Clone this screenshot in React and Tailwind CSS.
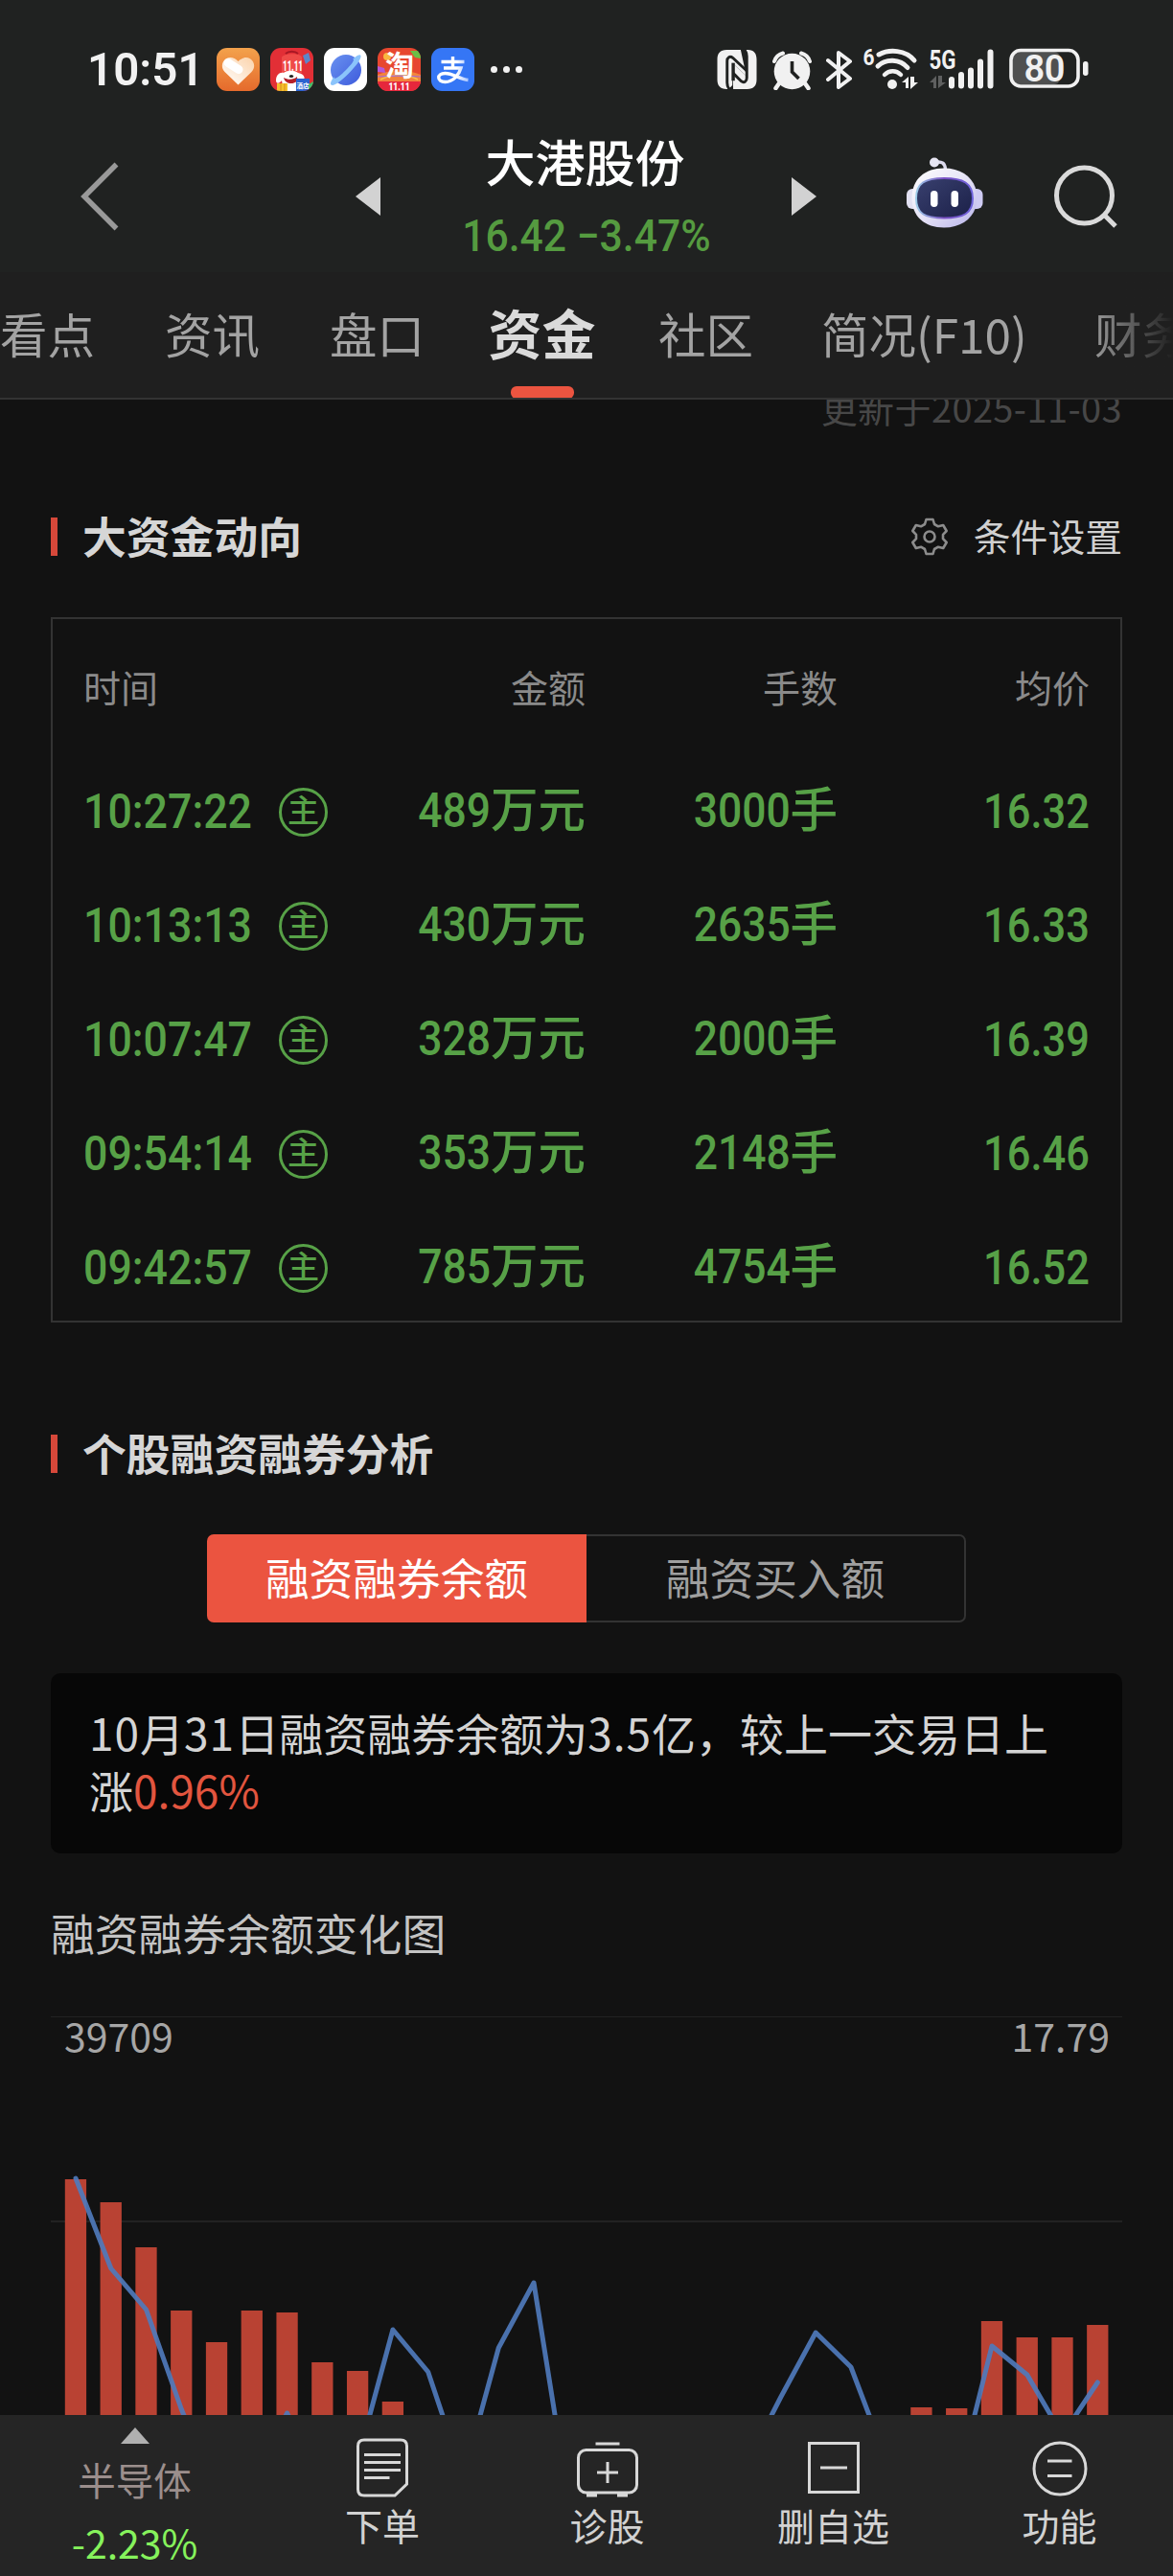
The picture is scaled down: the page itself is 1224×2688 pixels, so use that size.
import React from "react";

const CJK = "font-['Noto_Sans_CJK_SC',sans-serif]";
const NUM = "font-['Roboto','Noto_Sans_CJK_SC',sans-serif]";

function HeartApp() {
  return (
    <svg viewBox="0 0 45 45" className="size-[45px]">
      <defs>
        <linearGradient id="ha" x1="0" y1="0" x2="0" y2="1">
          <stop offset="0" stopColor="#f3a24c" />
          <stop offset="1" stopColor="#e56a2c" />
        </linearGradient>
        <linearGradient id="hb" x1="0" y1="1" x2="1" y2="0">
          <stop offset="0" stopColor="#ffffff" />
          <stop offset="1" stopColor="#fbd3ab" />
        </linearGradient>
      </defs>
      <rect width="45" height="45" rx="11" fill="url(#ha)" />
      <path d="M22.500 38.500 8.500 25C4.500 21 5 14 10 11.200c4-2.200 9-1 12.500 2.800 3.500-3.800 8.500-5 12.500-2.800 5 2.800 5.500 9.800 1.500 13.800z" fill="url(#hb)" />
      <path d="M12 15.500 23 22.500" stroke="#fff" strokeWidth="9" strokeLinecap="round" />
    </svg>
  );
}

function DogApp() {
  return (
    <svg viewBox="0 0 45 45" className="size-[45px] overflow-visible">
      <defs>
        <clipPath id="dc"><rect width="45" height="45" rx="11" /></clipPath>
      </defs>
      <g clipPath="url(#dc)">
        <rect width="45" height="45" fill="#e22f36" />
        <path d="M12 26V10c0-4 20-6 21 0v16z" fill="#ef4b48" />
        <path d="M16 6c3-3 10-3 13 0" stroke="#a91824" strokeWidth="2" fill="none" />
        <path d="M34 8l6-3 2 8-5 4z" fill="#5d86c9" />
        <path d="M14 26c-4-1-8 2-8 8 0 4 4 3 6 0l2 11h17l2-11c4 0 4-7-4-8-4-3-11-3-15 0z" fill="#fff" />
        <path d="M14 31c5 3 11 2 14-1 1 5-2 7-6 7s-7-2-8-6z" fill="#b4202a" />
        <ellipse cx="22" cy="29.500" rx="2.200" ry="1.500" fill="#222" />
        <path d="M7 37h11v8H7z" fill="#f5c02c" />
        <path d="M11 37v8M15 37v8" stroke="#d98e1d" />
        <path d="M27 32h14v13H27z" fill="#2a62cf" />
        <path d="M40 38l5-3v6l-5 4z" fill="#3fbf6a" />
      </g>
      <text x="23.500" y="23.500" textAnchor="middle" fontSize="15" fontWeight="800" fill="#fff" fontFamily="Roboto, sans-serif" textLength="21" lengthAdjust="spacingAndGlyphs">11.11</text>
      <text x="34" y="41.500" textAnchor="middle" fontSize="6.500" fontWeight="700" fill="#fff" fontFamily="Noto Sans CJK SC, sans-serif">酒店</text>
    </svg>
  );
}

function PlanetApp() {
  return (
    <svg viewBox="0 0 45 45" className="size-[45px]">
      <defs>
        <linearGradient id="pa" x1="0" y1="0" x2="1" y2="1">
          <stop offset="0" stopColor="#6a92f0" />
          <stop offset="1" stopColor="#3d5bdc" />
        </linearGradient>
      </defs>
      <rect width="45" height="45" rx="11" fill="#fff" />
      <circle cx="23" cy="23" r="16" fill="url(#pa)" />
      <path d="M30 12c5-5 8-5.500 8.500-4 1 3-5 11-13 19S10 40.500 7.500 38.500c-1.500-1.300.5-5 3-8.500 0 4.500 6-.5 12-6.500C29 17 33 11.500 30 12z" fill="#8bc4fb" />
    </svg>
  );
}

function TaoApp() {
  return (
    <svg viewBox="0 0 45 45" className="size-[45px] overflow-visible">
      <defs>
        <clipPath id="tc"><rect width="45" height="45" rx="11" /></clipPath>
      </defs>
      <g clipPath="url(#tc)">
        <rect width="45" height="45" fill="#e7472f" />
        <path d="M0 28c15-6 30-6 45 0v9H0z" fill="#f2843d" />
        <path d="M3 33c12-6 28-6 39 0" stroke="#f7c14b" strokeWidth="1.500" fill="none" />
        <path d="M0 30c12-1 30-1 45 0" stroke="#a66bd6" strokeWidth="1.200" fill="none" />
        <circle cx="10" cy="9" r="4" fill="#f9b640" />
        <path d="M34 3l11 0v8l-6-1z" fill="#6bbf45" />
        <path d="M0 19l7 2 1 5-8-1z" fill="#b659d8" />
        <rect y="35" width="45" height="10" fill="#e6273c" />
      </g>
      <text x="23" y="28.500" textAnchor="middle" fontSize="30" fontWeight="700" fill="#fff" fontFamily="Noto Sans CJK SC, sans-serif">淘</text>
      <text x="22.500" y="44" textAnchor="middle" fontSize="10" fontWeight="900" fill="#fff" fontFamily="Roboto, sans-serif" textLength="22" lengthAdjust="spacingAndGlyphs">11.11</text>
    </svg>
  );
}

function PayApp() {
  return (
    <svg viewBox="0 0 45 45" className="size-[45px]">
      <defs>
        <linearGradient id="zf" x1="0" y1="0" x2="1" y2="0">
          <stop offset="0.600" stopColor="#fff" />
          <stop offset="1" stopColor="#a9c5ff" />
        </linearGradient>
      </defs>
      <rect width="45" height="45" rx="11" fill="#3576f5" />
      <path d="M22.500 9v11M10.500 14.500h24M13 21h18c-2 7-8 14.500-16.500 14.500-9 0-9-9 0-9 8 0 15 6 24 7" fill="none" stroke="url(#zf)" strokeWidth="3.400" />
    </svg>
  );
}

function StatusIcons() {
  return (
    <div className="flex items-start pt-[50px]">
      {/* NFC */}
      <svg viewBox="0 0 42 42" className="mt-[2px] h-[41px] w-[42px]">
        <path d="M10 0h15l6 28-15-14v24l-4 4h-2C3 42 0 38 0 32V10C0 4 3 0 10 0z" fill="#f1f1f1" />
        <path d="M32 42H17l-1-28 15 14V4l-2-4h4c6 0 9 4 9 10v22c0 6-3 10-10 10z" fill="#f1f1f1" />
        <path d="M13 42c-2-2-2.500-4-2.500-7V12c0-4 3-6 6-3.500L31 22M29 0c2 2 2.500 4 2.500 7v23c0 4-3 6-6 3.500L17 25" fill="none" stroke="#202221" strokeWidth="3" />
        <path d="M17 14v19" stroke="#202221" strokeWidth="3.500" />
      </svg>
      {/* alarm */}
      <svg viewBox="0 0 41 41" className="ml-[16px] mt-[3px] size-[41px]">
        <path d="M2 11A13 13 0 0 1 11 2.500M39 11A13 13 0 0 0 30 2.500" stroke="#f1f1f1" strokeWidth="4" strokeLinecap="round" fill="none" />
        <circle cx="20.500" cy="21.500" r="18.800" fill="#f1f1f1" />
        <path d="M7 34l-3.500 5M34 34l3.500 5" stroke="#f1f1f1" strokeWidth="4.500" strokeLinecap="round" />
        <path d="M20.500 11v11l7 7" stroke="#202221" strokeWidth="3.600" fill="none" />
      </svg>
      {/* bluetooth */}
      <svg viewBox="0 0 28 42" className="ml-[15px] mt-[2px] h-[42px] w-[28px]">
        <path d="M2 11l23 19-12 9V3l12 9L2 31" fill="none" stroke="#f1f1f1" strokeWidth="4" strokeLinejoin="round" strokeLinecap="round" />
      </svg>
      {/* wifi */}
      <svg viewBox="0 0 57 45" className="ml-[11px] h-[45px] w-[57px] overflow-visible">
        <text x="-0.500" y="17.500" fontSize="24" fontWeight="700" fill="#f1f1f1" fontFamily="Roboto, sans-serif" textLength="12" lengthAdjust="spacingAndGlyphs">6</text>
        <path d="M16 7C27 1 44 2 53 13" stroke="#f1f1f1" strokeWidth="5" strokeLinecap="round" fill="none" />
        <path d="M15 19c8-8 23-8 31 1.500" stroke="#f1f1f1" strokeWidth="5" strokeLinecap="round" fill="none" />
        <path d="M22 28c5-5 12-5 17 0" stroke="#f1f1f1" strokeWidth="4.500" strokeLinecap="round" fill="none" />
        <circle cx="30" cy="38" r="5" fill="#f1f1f1" />
        <path d="M40 36l7-6v12h-3v-6zM49 30v13l8-7h-4v-6z" fill="#f1f1f1" />
      </svg>
      {/* signal */}
      <svg viewBox="0 0 67 43" className="ml-[12px] h-[43px] w-[67px] overflow-visible">
        <text x="-0.500" y="21.500" fontSize="28" fontWeight="700" fill="#f1f1f1" fontFamily="Roboto, sans-serif" textLength="28" lengthAdjust="spacingAndGlyphs">5G</text>
        <path d="M0 36l7-7v13H4v-6zM9 29v13l8-6h-4v-7z" fill="#5f6060" />
        <path d="M23 33v6.500M33 28v11.500M43 23.500v16M53 14.500v25M63.500 4.500v35" stroke="#f1f1f1" strokeWidth="6" strokeLinecap="round" />
      </svg>
      {/* battery */}
      <svg viewBox="0 0 84 42" className="ml-[16px] h-[42px] w-[84px] overflow-visible">
        <rect x="4" y="4" width="49" height="34" rx="6" fill="#4f5050" />
        <rect x="2" y="2.500" width="70" height="37.500" rx="10" fill="none" stroke="#f1f1f1" strokeWidth="3.600" />
        <rect x="77" y="14" width="5.500" height="15" rx="2.700" fill="#f1f1f1" />
        <text x="37" y="34.500" textAnchor="middle" fontSize="38" fontWeight="600" fill="#f1f1f1" fontFamily="Roboto, sans-serif" textLength="43" lengthAdjust="spacing">80</text>
      </svg>
    </div>
  );
}

function Robot() {
  return (
    <svg viewBox="0 0 80 75" className="h-[75px] w-[80px]">
      <defs>
        <linearGradient id="rb" x1="0" y1="0" x2="1" y2="1">
          <stop offset="0" stopColor="#ffffff" />
          <stop offset="0.500" stopColor="#e6e3f6" />
          <stop offset="1" stopColor="#b7b3ea" />
        </linearGradient>
        <linearGradient id="rf" x1="0" y1="0" x2="1" y2="1">
          <stop offset="0" stopColor="#39406f" />
          <stop offset="1" stopColor="#1b2048" />
        </linearGradient>
        <linearGradient id="rs" x1="0" y1="0" x2="1" y2="0">
          <stop offset="0" stopColor="#9ccbe8" />
          <stop offset="0.500" stopColor="#7a4fc4" />
          <stop offset="1" stopColor="#6d62dc" />
        </linearGradient>
      </defs>
      <rect x="0" y="33" width="14" height="21" rx="6" fill="#e2e0f2" />
      <rect x="66" y="33" width="13.500" height="21" rx="6" fill="#cfcbf3" />
      <path d="M31 5c6-.5 9 1 9.500 8" stroke="#dddbee" strokeWidth="3.500" fill="none" />
      <circle cx="29" cy="5.500" r="5" fill="#e6e5f2" />
      <path d="M39 11.500c20 0 34.500 12 34.500 31S59 73.500 39 73.500 5.500 62 5.500 42.500s13.500-31 33.500-31z" fill="url(#rb)" />
      <path d="M39 22c20 0 30 5 30 21s-10 20.500-30 20.500S10 59 10 43s9-21 29-21z" fill="url(#rf)" stroke="url(#rs)" strokeWidth="2" />
      <rect x="25" y="35" width="7.500" height="17" rx="3.700" fill="#fff" />
      <rect x="46.500" y="35" width="7.500" height="17" rx="3.700" fill="#fff" />
    </svg>
  );
}

function SectionTitle({ children }) {
  return (
    <div className="flex items-center">
      <div className="h-[40px] w-[7px] bg-[#d6483a]" />
      <h2 className="ml-[26px] text-[45.800px] leading-[56px] font-bold text-[#d6d6d6] -translate-y-[2px]">{children}</h2>
    </div>
  );
}

const tabs = ["看点", "资讯", "盘口", "资金", "社区", "简况(F10)", "财务"];

const trades = [
  ["10:27:22", "489", "3000", "16.32"],
  ["10:13:13", "430", "2635", "16.33"],
  ["10:07:47", "328", "2000", "16.39"],
  ["09:54:14", "353", "2148", "16.46"],
  ["09:42:57", "785", "4754", "16.52"],
];

// [bar index, distance of the bar's top from the upper grid line]
const bars = [
  [0, 170], [1, 194], [2, 241], [3, 307], [4, 340], [5, 307], [6, 309], [7, 361], [8, 370], [9, 402],
  [24, 408], [25, 409], [26, 318], [27, 335], [28, 335], [29, 322],
];

const prices = [
  169, 263, 306, 410, 500, 480, 414, 490, 463, 327, 371, 481, 346, 278, 508, 520, 520, 520, 520, 470,
  398, 330, 366, 463, 500, 491, 344, 374, 437, 382,
];

function Chart() {
  const pts = prices.map((p, i) => `${26 + i * 36.77},${p}`).join(" ");
  return (
    <svg viewBox="0 0 1118 416" className="block h-[416px] w-[1118px] shrink-0">
      <path d="M0 0h1118M0 214h1118" stroke="#222222" strokeWidth="2" />
      {bars.map(([i, top]) => (
        <rect key={i} x={14.800 + i * 36.77} y={top} width="22.300" height={500 - top} fill="#b94233" />
      ))}
      <polyline points={pts} fill="none" stroke="#4f7abb" strokeOpacity="0.920" strokeWidth="5" strokeLinejoin="round" strokeLinecap="round" />
      <text x="14" y="37" fontSize="41" fill="#a6a6a6" fontFamily="Noto Sans CJK SC, sans-serif">39709</text>
      <text x="1105" y="37" textAnchor="end" fontSize="41" fill="#a6a6a6" fontFamily="Noto Sans CJK SC, sans-serif">17.79</text>
    </svg>
  );
}

function NavItem({ className, label, children }) {
  return (
    <div className={`flex flex-col items-center ${className}`}>
      <div className="flex h-[110px] items-start justify-center pt-[23px]">{children}</div>
      <span className="-mt-[24px] text-[39px] leading-[56px] text-[#d2d2d2]">{label}</span>
    </div>
  );
}

export default function App() {
  return (
    <div className={`flex h-[2688px] w-[1224px] flex-col overflow-hidden bg-[#121212] whitespace-nowrap ${CJK}`}>
      <header className="h-[284px] shrink-0 bg-[#202221]">
        <div className="flex h-[130px] items-start">
          <div className={`ml-[91px] w-[135px] pt-[43px] text-[49px] leading-[60px] font-semibold text-[#f1f1f1] ${NUM}`}>
            <span className="inline-block origin-left scale-x-[0.970]">10:51</span>
          </div>
          <div className="flex gap-[11px] pt-[50px]">
            <HeartApp />
            <DogApp />
            <PlanetApp />
            <TaoApp />
            <PayApp />
          </div>
          <div className="ml-[17px] flex gap-[6px] pt-[69px]">
            <i className="size-[7px] rounded-full bg-[#f1f1f1]" />
            <i className="size-[7px] rounded-full bg-[#f1f1f1]" />
            <i className="size-[7px] rounded-full bg-[#f1f1f1]" />
          </div>
          <div className="ml-[203px]">
            <StatusIcons />
          </div>
        </div>
        <div className="flex h-[150px] items-center">
          <svg viewBox="0 0 42 74" className="ml-[83px] h-[74px] w-[42px]">
            <path d="M38.500 3.500 5 37l33.500 33.500" fill="none" stroke="#999" strokeWidth="5.500" />
          </svg>
          <svg viewBox="0 0 26 40" className="ml-[246px] h-[40px] w-[26px]">
            <path d="M26 0v40L0 20z" fill="#d2d2d2" />
          </svg>
          <div className="flex h-[150px] w-[429px] flex-col items-center">
            <h1 className="mt-[3px] -translate-x-px text-[52px] leading-[70px] font-medium text-white">大港股份</h1>
            <div className={`mt-[13px] flex text-[46px] leading-[60px] text-[#559b40] ${NUM}`}>
              <span className="origin-center scale-x-[0.927] font-medium">16.42 −3.47%</span>
            </div>
          </div>
          <svg viewBox="0 0 26 40" className="h-[40px] w-[26px]">
            <path d="M0 0v40l26-20z" fill="#d2d2d2" />
          </svg>
          <div className="ml-[94px] -mt-[8px]">
            <Robot />
          </div>
          <svg viewBox="0 0 68 68" className="ml-[73px] size-[68px]">
            <circle cx="32.500" cy="33" r="29" fill="none" stroke="#dadada" strokeWidth="5" />
            <path d="M53 53 65 65" stroke="#dadada" strokeWidth="5" />
          </svg>
        </div>
      </header>

      <nav className="relative flex h-[133px] shrink-0 gap-[72px] overflow-hidden border-b-2 border-[#333333] bg-[#1f1f1f]">
        {tabs.map((t) =>
          t === "资金" ? (
            <div key={t} className="flex w-[99px] shrink-0 flex-col items-center">
              <span className="mt-[22px] text-[56px] leading-[80px] font-bold text-[#dadada]">{t}</span>
              <i className="mt-[17px] h-[13px] w-[66px] shrink-0 rounded-[6px] bg-[#eb5440]" />
            </div>
          ) : t === "简况(F10)" ? (
            <span key={t} className="-ml-[2px] w-[213px] shrink-0 pt-[24px] text-[49.500px] leading-[80px] text-[#a3a3a3]">{t}</span>
          ) : (
            <span key={t} className="w-[100px] shrink-0 pt-[24px] text-[49.500px] leading-[80px] text-[#a3a3a3]">{t}</span>
          )
        )}
        <div className="absolute top-0 right-0 h-[130px] w-[90px] bg-linear-to-r from-transparent to-[#1f1f1f]" />
      </nav>

      <main className="flex min-h-0 flex-1 flex-col overflow-hidden px-[53px]">
        <div className="-mt-[17px] h-[50px] shrink-0 self-end text-[38px] leading-[50px] tracking-[0.400px] text-[#474747] [clip-path:inset(17px_0_0_0)]">更新于2025-11-03</div>

        <div className="mt-[82px] flex h-[56px] shrink-0 items-center justify-between">
          <SectionTitle>大资金动向</SectionTitle>
          <div className="flex items-center">
            <svg viewBox="0 0 40 40" className="size-[40px]" fill="none" stroke="#8c8c8c" strokeWidth="2.600" strokeLinejoin="round">
              <path d="M16.500 2h7l1.500 5 4 2.300 5.200-1.300 3.500 6-3.700 3.800v4.400l3.700 3.800-3.500 6-5.200-1.300-4 2.300-1.500 5h-7L15 33l-4-2.300L5.800 32l-3.500-6L6 22.200v-4.400L2.300 14l3.500-6L11 9.300 15 7z" />
              <circle cx="20" cy="20" r="5.500" />
            </svg>
            <span className="ml-[26px] text-[38.800px] leading-[56px] text-[#d0d0d0] -translate-y-[2px]">条件设置</span>
          </div>
        </div>

        <div className="mt-[56px] h-[736px] w-[1118px] shrink-0 border-2 border-[#333333] pl-[32px]">
          <div className="mt-[42px] flex text-[39px] leading-[56px] text-[#8a8a8a]">
            <span className="w-[255px]">时间</span>
            <span className="w-[269px] text-right">金额</span>
            <span className="w-[263px] text-right">手数</span>
            <span className="w-[263px] text-right">均价</span>
          </div>
          <div className="mt-[44px]">
            {trades.map(([time, amt, vol, avg]) => (
              <div key={time} className="flex h-[119px] items-center text-[49.500px] leading-[60px] font-medium text-[#57a147]">
                <div className={`w-[204px] -translate-y-px text-[50.500px] ${NUM}`}>
                  <span className="inline-block origin-left scale-x-[0.885]">{time}</span>
                </div>
                <div className="flex size-[51px] shrink-0 items-center justify-center rounded-full border-[3px] border-[#57a147]">
                  <span className="text-[33px] leading-[40px] -translate-y-[4px]">主</span>
                </div>
                <div className="flex w-[269px] -translate-y-[4px] items-baseline justify-end">
                  <span className={`inline-block origin-right scale-x-[0.880] text-[50.500px] ${NUM}`}>{amt}</span>
                  <span>万元</span>
                </div>
                <div className="flex w-[263px] -translate-y-[4px] items-baseline justify-end">
                  <span className={`inline-block origin-right scale-x-[0.880] text-[50.500px] ${NUM}`}>{vol}</span>
                  <span>手</span>
                </div>
                <div className={`w-[263px] -translate-y-px text-right text-[50.500px] ${NUM}`}>
                  <span className="inline-block origin-right scale-x-[0.860]">{avg}</span>
                </div>
              </div>
            ))}
          </div>
        </div>

        <div className="mt-[109px] shrink-0">
          <SectionTitle>个股融资融券分析</SectionTitle>
        </div>

        <div className="mt-[56px] flex h-[92px] w-[792px] shrink-0 self-center text-[45.700px] leading-[88px]">
          <div className="w-[396px] rounded-l-[7px] bg-[#eb5440] text-center text-white">融资融券余额</div>
          <div className="w-[396px] rounded-r-[7px] border-2 border-l-0 border-[#333333] text-center leading-[84px] text-[#9f9f9f]">融资买入额</div>
        </div>

        <div className="mt-[53px] h-[188px] shrink-0 rounded-[10px] bg-[#070707] px-[40px] pt-[31px] text-[46px] leading-[60px] text-[#d4d4d4]">
          <p><span className="tracking-[1px]">10</span>月<span className="tracking-[1px]">31</span>日融资融券余额为<span className="tracking-[1px]">3.5</span>亿，较上一交易日上</p>
          <p>涨<span className="text-[#e2553f]">0.96%</span></p>
        </div>

        <h3 className="mt-[52px] shrink-0 text-[45.800px] leading-[60px] text-[#c4c4c4]">融资融券余额变化图</h3>
        <div className="mt-[58px] shrink-0">
          <Chart />
        </div>
      </main>

      <footer className="flex h-[168px] shrink-0 bg-[#252525]">
        <div className="flex w-[281px] flex-col items-center">
          <svg viewBox="0 0 30 17" className="mt-[13px] h-[17px] w-[30px]">
            <path d="M15 0 30 17H0z" fill="#b0b0b0" />
          </svg>
          <span className="mt-[9px] text-[39.500px] leading-[56px] text-[#9b8e8c]">半导体</span>
          <span className="mt-[9px] text-[41px] leading-[56px] text-[#86f25c]">-2.23%</span>
        </div>
        <NavItem className="w-[236px]" label="下单">
          <svg viewBox="0 0 54 62" className="mt-px h-[62px] w-[54px]" fill="none" stroke="#d8d8d8" strokeWidth="3">
            <path d="M8 2h38q6.500 0 6.500 6.500V48L40 60H8q-6.500 0-6.500-6.500v-45Q1.500 2 8 2z" />
            <path d="M8 17.500h38M8 25.500h38M8 33.500h38M8 41.500h26.500" />
          </svg>
        </NavItem>
        <NavItem className="w-[233px]" label="诊股">
          <svg viewBox="0 0 64 58" className="mt-[5px] h-[58px] w-[64px]" fill="none" stroke="#d8d8d8" strokeWidth="3">
            <rect x="1.500" y="8.500" width="61" height="44.500" rx="8" />
            <path d="M19.500 2h25M21 32h22M32 21v22" />
            <path d="M10 55.500h11M42 55.500h11" strokeWidth="4" />
          </svg>
        </NavItem>
        <NavItem className="w-[239px]" label="删自选">
          <svg viewBox="0 0 54 54" className="mt-[5px] size-[54px]" fill="none" stroke="#d8d8d8" strokeWidth="3">
            <rect x="1.500" y="1.500" width="51" height="51" />
            <path d="M13 27h28" />
          </svg>
        </NavItem>
        <NavItem className="w-[233px]" label="功能">
          <svg viewBox="0 0 58 58" className="mt-[4px] size-[58px]" fill="none" stroke="#d8d8d8" strokeWidth="3">
            <circle cx="29" cy="29" r="27" />
            <path d="M16 21h25.500M16 36.500h25.500" />
          </svg>
        </NavItem>
      </footer>
    </div>
  );
}
